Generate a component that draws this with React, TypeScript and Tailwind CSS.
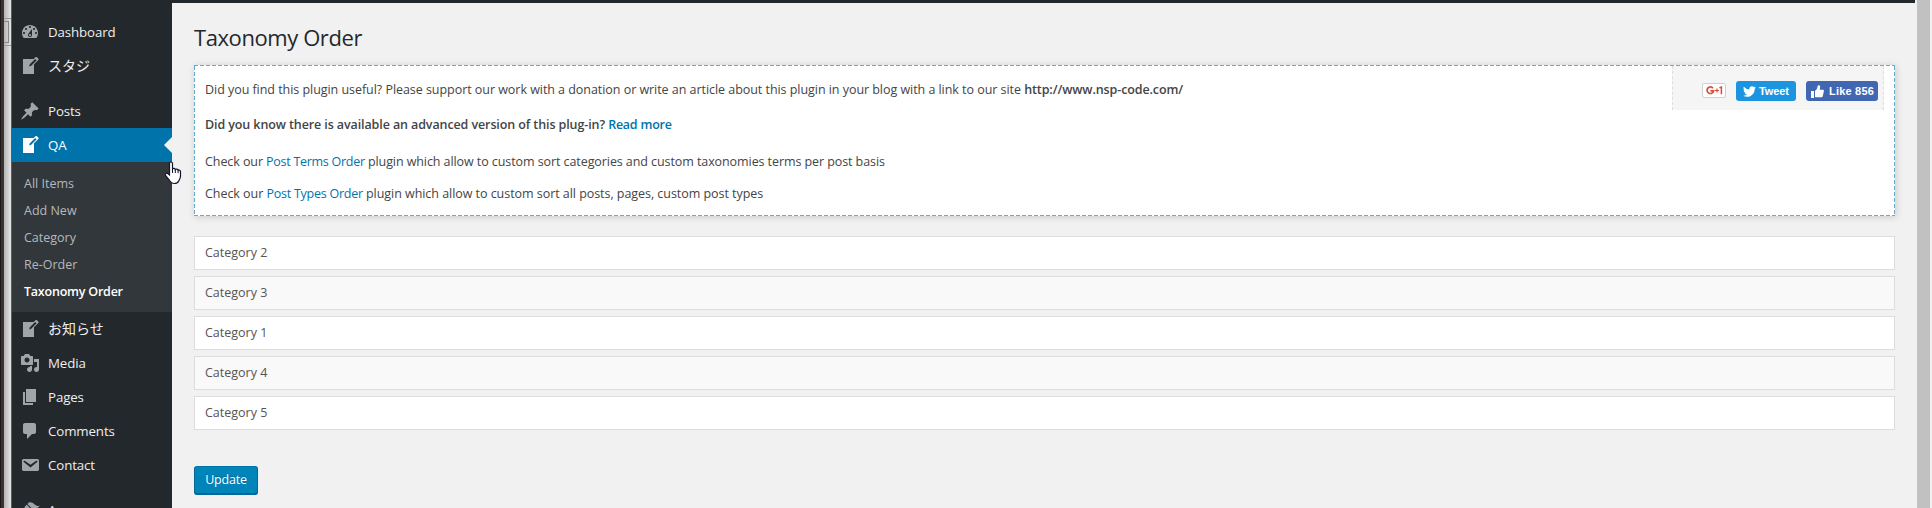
import React from "react";

const paths = {
  dashboard:
    "M3.76 16h12.48c1.1-1.37 1.76-3.11 1.76-5 0-4.42-3.58-8-8-8s-8 3.58-8 8c0 1.89.66 3.63 1.76 5zM10 4c.55 0 1 .45 1 1s-.45 1-1 1-1-.45-1-1 .45-1 1-1zM6 6c.55 0 1 .45 1 1s-.45 1-1 1-1-.45-1-1 .45-1 1-1zm8 0c.55 0 1 .45 1 1s-.45 1-1 1-1-.45-1-1 .45-1 1-1zm-5.37 5.55L12 7v6c0 1.1-.9 2-2 2s-2-.9-2-2c0-.57.24-1.08.63-1.45zM4 10c.55 0 1 .45 1 1s-.45 1-1 1-1-.45-1-1 .45-1 1-1zm12 0c.55 0 1 .45 1 1s-.45 1-1 1-1-.45-1-1 .45-1 1-1zm-5 3c0-.55-.45-1-1-1s-1 .45-1 1 .45 1 1 1 1-.45 1-1z",
  write:
    "M16.89 1.2l1.41 1.41c.39.39.39 1.02 0 1.41L14 8.33V18H3V3h10.67l1.8-1.8c.4-.39 1.03-.4 1.42 0zm-5.66 8.48l5.37-5.36-1.42-1.42-5.36 5.37-.71 2.12z",
  pin: "M10.44 3.02l1.82-1.82 6.36 6.35-1.83 1.82c-1.05-.68-2.48-.57-3.41.36l-.75.75c-.92.93-1.04 2.35-.35 3.41l-1.83 1.82-2.41-2.41-2.8 2.79c-.42.42-3.38 2.71-3.8 2.29s1.86-3.39 2.28-3.81l2.79-2.79L4.1 9.36l1.83-1.82c1.05.69 2.48.57 3.4-.36l.75-.75c.93-.92 1.05-2.35.36-3.41z",
  media:
    "M13 11V4c0-.55-.45-1-1-1h-1.67L9 1H5L3.67 3H2c-.55 0-1 .45-1 1v7c0 .55.45 1 1 1h10c.55 0 1-.45 1-1zM7 4.5c1.38 0 2.5 1.12 2.5 2.5S8.38 9.5 7 9.5 4.5 8.38 4.5 7 5.62 4.5 7 4.5zM14 6h5v10.5c0 1.38-1.12 2.5-2.5 2.5S14 17.88 14 16.5s1.12-2.5 2.5-2.5c.17 0 .34.02.5.05V9h-3V6zm-4 8.05V13h2v3.5c0 1.38-1.12 2.5-2.5 2.5S7 17.88 7 16.5 8.12 14 9.5 14c.17 0 .34.02.5.05z",
  page: "M6 15V2h10v13H6zm-1 1h8v2H3V5h2v11z",
  comments:
    "M5 2h9c1.1 0 2 .9 2 2v7c0 1.1-.9 2-2 2h-2l-5 5v-5H5c-1.1 0-2-.9-2-2V4c0-1.1.9-2 2-2z",
  email:
    "M3.87 4h13.25C18.37 4 19 4.59 19 5.79v8.42c0 1.19-.63 1.79-1.88 1.79H3.87c-1.25 0-1.88-.6-1.88-1.79V5.79c0-1.2.63-1.79 1.88-1.79zm6.62 8.6l6.74-5.53c.24-.2.43-.66.13-1.07-.29-.41-.82-.42-1.17-.17l-5.7 3.86L4.8 5.83c-.35-.25-.88-.24-1.17.17-.3.41-.11.87.13 1.07z",
  appearance:
    "M14.48 11.06L7.41 3.99l1.5-1.5c.5-.56 2.3-.47 3.51.32 1.21.8 1.43 1.28 2.91 2.1 1.18.64 2.45 1.26 4.45.85zm-.71.71L6.7 4.7 4.93 6.47c-.39.39-.39 1.02 0 1.41l1.06 1.06c.39.39.39 1.03 0 1.42-.6.6-1.43 1.11-2.21 1.69-.35.26-.7.53-1.01.84C1.43 14.23.4 16.08 1.4 17.07c.99 1 2.84-.03 4.18-1.36.31-.31.58-.66.85-1.02.57-.78 1.08-1.61 1.69-2.21.39-.39 1.02-.39 1.41 0l1.06 1.06c.39.39 1.02.39 1.41 0z",
};

type IconName = keyof typeof paths;

function MenuItem({
  icon,
  label,
  active = false,
  japanese = false,
}: {
  icon: IconName;
  label: string;
  active?: boolean;
  japanese?: boolean;
}) {
  return (
    <div
      className={
        active
          ? "relative flex h-[34px] shrink-0 items-center bg-[#0073aa] text-white"
          : "flex h-[34px] shrink-0 items-center text-[#eeeeee]"
      }
    >
      <svg
        viewBox="0 0 20 20"
        fillRule="evenodd"
        className={active ? "ml-2 size-5 fill-white" : "ml-2 size-5 fill-[#a0a5aa]"}
      >
        <path d={paths[icon]} />
      </svg>
      <span
        className={
          japanese
            ? "ml-2 text-[14px] leading-[18px]"
            : "ml-2 text-[13.3px] leading-[18px] tracking-[-0.12px]"
        }
      >
        {label}
      </span>
      {active && (
        <span className="absolute top-[9px] right-0 border-y-8 border-r-8 border-y-transparent border-r-[#f1f1f1]" />
      )}
    </div>
  );
}

function Sidebar() {
  return (
    <nav className="flex h-full w-40 shrink-0 flex-col overflow-hidden bg-[#23282d] pt-[15px]">
      <MenuItem icon="dashboard" label="Dashboard" />
      <MenuItem icon="write" label="スタジ" japanese />
      <div className="h-[11px] shrink-0" />
      <MenuItem icon="pin" label="Posts" />
      <MenuItem icon="write" label="QA" active />
      <ul className="h-[150px] shrink-0 bg-[#32373c] pt-2 pl-3 text-[12.5px] leading-[27px] text-[#b4b9be]">
        <li>All Items</li>
        <li>Add New</li>
        <li>Category</li>
        <li>Re-Order</li>
        <li className="font-semibold tracking-[-0.22px] text-white">Taxonomy Order</li>
      </ul>
      <MenuItem icon="write" label="お知らせ" japanese />
      <MenuItem icon="media" label="Media" />
      <MenuItem icon="page" label="Pages" />
      <MenuItem icon="comments" label="Comments" />
      <MenuItem icon="email" label="Contact" />
      <div className="h-[11px] shrink-0" />
      <MenuItem icon="appearance" label="Appearance" />
    </nav>
  );
}

function ShareButtons() {
  return (
    <div className="mr-[10px] flex h-11 w-[212px] shrink-0 items-center justify-end border-x border-dashed border-[#dddddd] bg-[#f5f5f5] pr-[5px] font-['Liberation_Sans',sans-serif] text-[11px] font-bold text-white">
      <div className="mt-[5px] flex h-[15px] w-6 items-center justify-center rounded-[2px] border border-[#d0d0d0] bg-white">
        <svg viewBox="0 0 17 9" className="h-[9px] w-[17px] shrink-0" fill="none" stroke="#dd4b39">
          <path d="M7 2.2A3.3 3.3 0 1 0 7.6 4.9H4.4" strokeWidth="1.7" />
          <path d="M9 4.5h4M11 2.5v4" strokeWidth="1.2" />
          <path d="M13.4 1.9l2-.8v7.2" strokeWidth="1.5" />
        </svg>
      </div>
      <div className="mt-[6px] ml-[10px] flex h-5 w-[60px] items-center rounded-[3px] bg-[#1b95e0] pl-[7px]">
        <svg viewBox="0 0 24 24" className="size-[13px] fill-white">
          <path d="M23.95 4.57a10 10 0 0 1-2.82.78 4.96 4.96 0 0 0 2.16-2.73c-.95.56-2 .96-3.13 1.18a4.92 4.92 0 0 0-8.38 4.49A13.93 13.93 0 0 1 1.64 3.16a4.92 4.92 0 0 0 1.52 6.57 4.9 4.9 0 0 1-2.23-.61v.06a4.92 4.92 0 0 0 3.95 4.83 4.96 4.96 0 0 1-2.21.08 4.94 4.94 0 0 0 4.6 3.42A9.87 9.87 0 0 1 0 19.54a13.99 13.99 0 0 0 7.55 2.21c9.05 0 14-7.5 14-13.98 0-.21 0-.42-.02-.63a9.94 9.94 0 0 0 2.46-2.55z" />
        </svg>
        <span className="ml-[3px] tracking-[-0.1px]">Tweet</span>
      </div>
      <div className="mt-[6px] ml-[10px] flex h-5 w-[72px] items-center rounded-[3px] bg-[#4267b2] pl-[5px]">
        <svg viewBox="0 0 13 13" className="size-[13px] fill-white">
          <path d="M0 6h3v7H0zM4 5.8C5.6 4.9 6.4 3.4 6.6 1.6 6.7.6 7.2.2 7.9.3 9.2.5 9.4 1.8 9 3.2L8.6 4.8h3.2c.8 0 1.3.7 1.1 1.4l-1.2 5c-.2.8-.7 1.1-1.4 1.1H5.5c-.8 0-1.5-.3-1.5-.9z" />
        </svg>
        <span className="ml-[5px] tracking-[0.2px]">Like 856</span>
      </div>
    </div>
  );
}

function Notice() {
  return (
    <section className="flex h-[151px] flex-col bg-white text-[12.5px] text-[#444444] shadow-[1px_1px_7px_rgba(0,0,0,0.17)]">
      <div className="h-px shrink-0 bg-[repeating-linear-gradient(90deg,#63adcc_0_4px,transparent_4px_6px)]" />
      <div className="flex grow justify-between">
        <div className="w-px shrink-0 bg-[repeating-linear-gradient(180deg,#63adcc_0_4px,transparent_4px_6px)]" />
        <div className="grow pt-[14px] pl-[10px] whitespace-nowrap">
          <p className="leading-5 tracking-[-0.044px]">
            Did you find this plugin useful? Please support our work with a donation or write an
            article about this plugin in your blog with a link to our site{" "}
            <b className="font-semibold tracking-[-0.11px]">http://www.nsp-code.com/</b>
          </p>
          <p className="mt-[15px] leading-5 font-semibold tracking-[-0.104px]">
            Did you know there is available an advanced version of this plug-in?{" "}
            <a className="tracking-[-0.23px] text-[#0073aa]">Read more</a>
          </p>
          <p className="mt-[17px] leading-5 tracking-[-0.08px]">
            Check our <a className="tracking-[-0.28px] text-[#0073aa]">Post Terms Order</a> plugin
            which allow to custom sort categories and custom taxonomies terms per post basis
          </p>
          <p className="mt-3 leading-5 tracking-[-0.045px]">
            Check our <a className="tracking-[-0.25px] text-[#0073aa]">Post Types Order</a> plugin
            which allow to custom sort all posts, pages, custom post types
          </p>
        </div>
        <ShareButtons />
        <div className="w-px shrink-0 bg-[repeating-linear-gradient(180deg,#63adcc_0_4px,transparent_4px_6px)]" />
      </div>
      <div className="h-px shrink-0 bg-[repeating-linear-gradient(90deg,#63adcc_0_4px,transparent_4px_6px)]" />
    </section>
  );
}

const categories = ["Category 2", "Category 3", "Category 1", "Category 4", "Category 5"];

export default function App() {
  return (
    <div className="relative flex h-[508px] w-[1932px] overflow-hidden bg-[#f1f1f1] font-['Open_Sans','Noto_Sans_CJK_JP',sans-serif]">
      <div className="flex h-full w-3 shrink-0">
        <div className="w-px bg-[#1c1918]" />
        <div className="w-[3px] bg-[#383330]" />
        <div className="flex w-[7px] flex-col bg-linear-to-r from-[#b4b4b4] to-[#e6e6e6]">
          <div className="mt-[18px] h-[28px] border-y border-[#999999] py-[2px]">
            <div className="h-full w-[5px] border-y border-r border-[#888888]" />
          </div>
        </div>
        <div className="w-px bg-[#5c5c5c]" />
      </div>
      <Sidebar />
      <main className="w-[1743px] shrink-0 border-t-[3px] border-[#23282d] pr-5 pl-[22px]">
        <h1 className="pt-[18px] pb-px text-[22px] leading-[33px] tracking-[-0.42px] text-[#23282d]">
          Taxonomy Order
        </h1>
        <div className="pt-[10px]">
          <Notice />
        </div>
        <ul className="mt-5 flex flex-col gap-[6px]">
          {categories.map((name) => (
            <li
              key={name}
              className="flex h-[34px] items-center border border-[#dddddd] bg-white pl-[10px] text-[12.5px] text-[#555555] even:bg-[#f9f9f9]"
            >
              {name}
            </li>
          ))}
        </ul>
        <button className="mt-9 flex h-[29px] w-16 items-center justify-center rounded-[3px] border border-[#006799] border-t-[#0073aa] bg-[#0085ba] text-[12.5px] font-medium tracking-[-0.2px] text-white shadow-[inset_0_-1px_0_#006799] [text-shadow:0_-1px_1px_#006799]">
          Update
        </button>
      </main>
      <div className="ml-[2px] w-[13px] shrink-0 bg-[#c1c1c1]" />
      <svg viewBox="0 0 18 24" className="absolute top-[161px] left-[164px] h-6 w-[18px]">
        <path
          d="M5.5 14V2.5c0-2 3-2 3 0V8c.5-1 2.6-.8 2.8.5.6-.8 2.6-.5 2.8.7.8-.6 2.4 0 2.4 1.5v4.6c0 2-1.2 3-1.5 4.2-.8 2-2.3 3-4.5 3-2.8 0-4-1.2-5.2-3.5L1.5 14.5c-.8-2 1.3-3 2.6-1.7z"
          fill="#ffffff"
          stroke="#15152a"
          strokeWidth="1.2"
        />
        <path d="M8.500 8v4M11.300 8.500v3.500M14.100 9.200v3" stroke="#15152a" strokeWidth="1" />
      </svg>
    </div>
  );
}
